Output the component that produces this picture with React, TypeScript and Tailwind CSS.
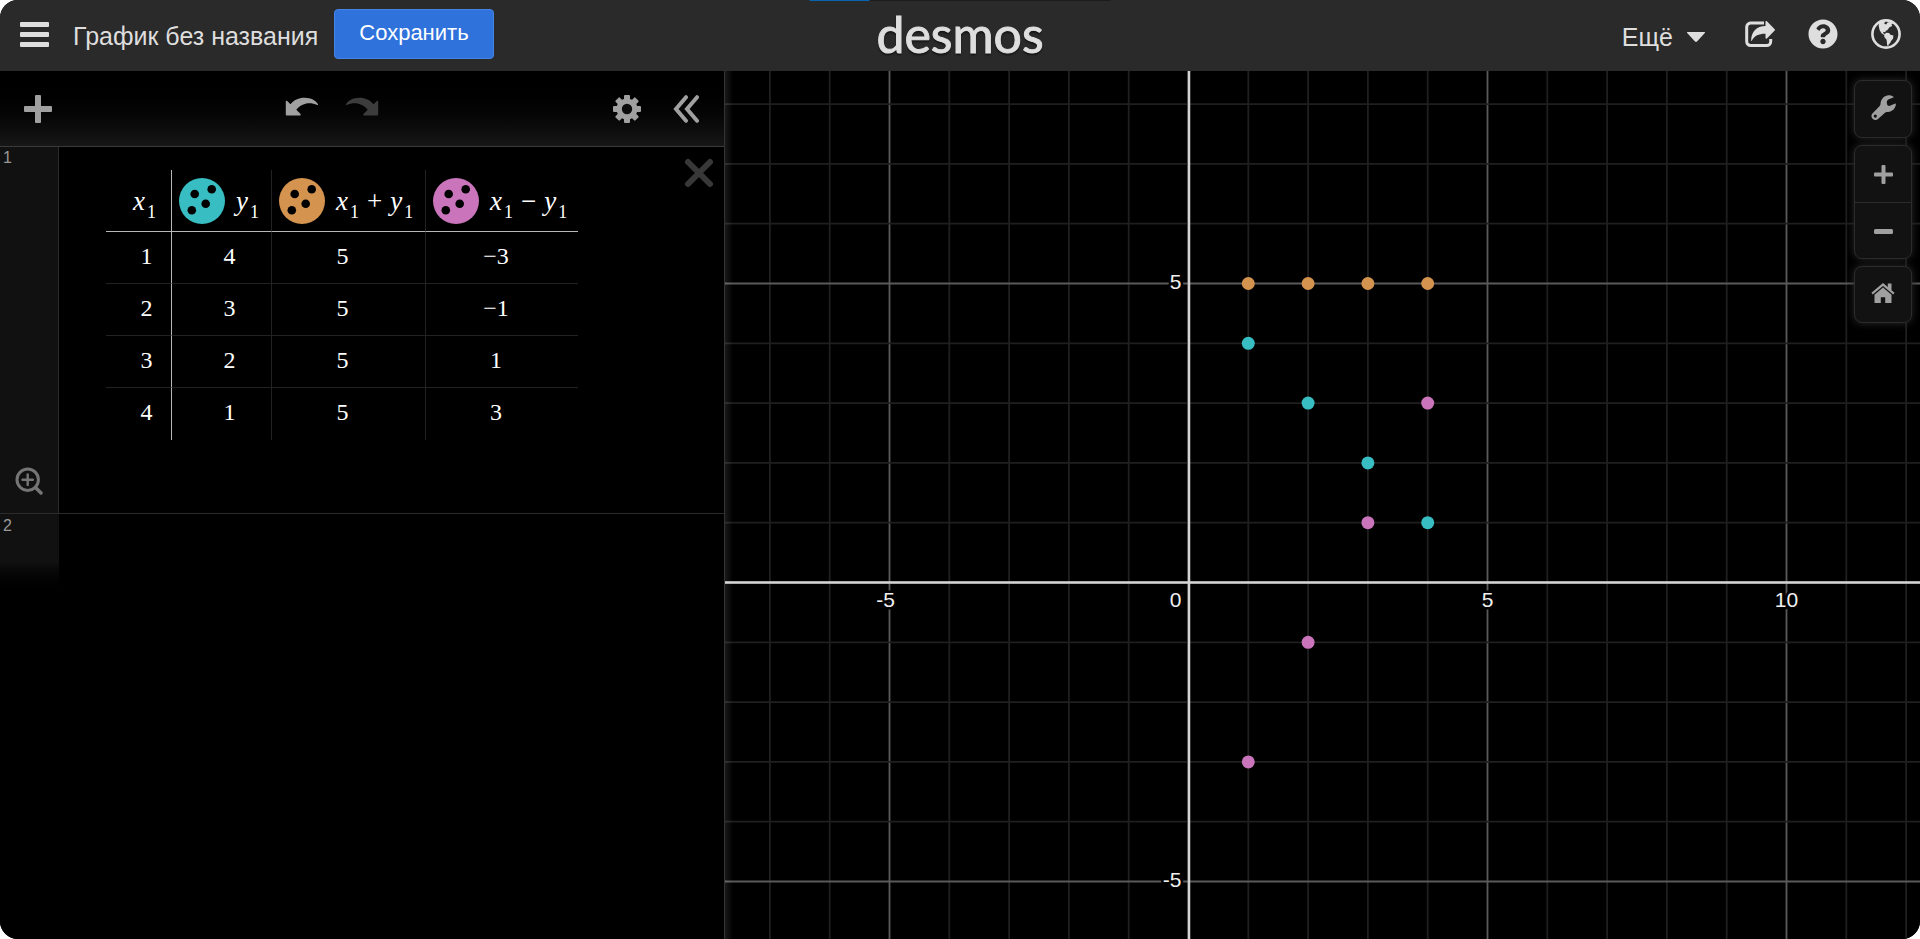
import React from "react";
import { FaQuestionCircle } from "react-icons/fa";

const TEAL = "#38bdc2";
const ORANGE = "#d4934f";
const PINK = "#c974bb";

const UNIT = 59.8;
const ORIGIN = { x: 463.5, y: 511.5 };
const px = (x: number) => ORIGIN.x + x * UNIT;
const py = (y: number) => ORIGIN.y - y * UNIT;

const range = (from: number, to: number) =>
  Array.from({ length: to - from + 1 }, (_, i) => from + i);

const rows = [1, 2, 3, 4].map((x) => {
  const y = 5 - x;
  return { x, y, sum: x + y, diff: x - y };
});

const minus = (n: number) => String(n).replace("-", "−");

function Sub({ name }: { name: string }) {
  return (
    <span>
      <i>{name}</i>
      <sub className="relative top-2 ml-0.5 align-baseline text-[18px] leading-none">1</sub>
    </span>
  );
}

function Dots({ className, label }: { className: string; label: string }) {
  return (
    <button type="button" aria-label={label} className={className}>
      <svg viewBox="0 0 46 46" className="size-full" fill="#000">
        <circle cx="15.7" cy="16" r="4.3" />
        <circle cx="32.7" cy="11.3" r="4.3" />
        <circle cx="26.7" cy="25.8" r="4.3" />
        <circle cx="12.8" cy="32.2" r="4.3" />
      </svg>
    </button>
  );
}

function CurvedArrow({ className }: { className: string }) {
  return (
    <svg viewBox="0 0 34 20" className={className} fill="currentColor">
      <path d="M.8 4.6C.8 3.8 1.7 3.5 2.2 4L5.5 7.2C9 3 14 .6 20 .8c6 .2 10.500 2.500 13 6.400.3.600-.1 1-.7.800C28 6.200 24.500 5.800 20.500 6.700c-4 .9-7 3.200-9.200 6l4 4c.7.700.4 1.900-.6 1.900H2c-.7 0-1.200-.5-1.200-1.200z" />
    </svg>
  );
}

function Gear() {
  return (
    <svg viewBox="-14 -14 28 28" className="size-7" fill="currentColor">
      {range(0, 3).map((i) => (
        <rect key={i} x="-3" y="-14" width="6" height="28" rx="1" transform={`rotate(${i * 45})`} />
      ))}
      <circle r="10.500" />
      <circle r="5.200" fill="#0c0c0c" />
    </svg>
  );
}

function Globe() {
  return (
    <svg viewBox="0 0 30 30" className="size-[30px]">
      <circle cx="15" cy="15" r="13.600" fill="none" stroke="currentColor" strokeWidth="2.600" />
      <path
        fill="currentColor"
        d="M8 4.300 12 2l2 1.200-.8 1.600 2 .8 1.300-2.100L20 2.800l2.300 1.700-1.800.5.7 2-2.700 1.300-2.300 3-1.400.4-.5 1.500-1.800-.5-.4 1.300 1.600.9-.5 1-2.700-1.700L8.600 11 7.700 7z"
      />
      <path
        fill="currentColor"
        d="M13.200 15.200l2.300-1.500 2.600.4 1.300 1.600 3 .8-.3 3-1.800 2.200-1.300 2.500-1.300 1.200-.4 1.700-1.100-.7-.6-5.600-2.300-2.700z"
      />
    </svg>
  );
}

function Header() {
  return (
    <header className="grid h-[71px] shrink-0 grid-cols-[1fr_auto_1fr] items-center bg-[#2a2a2a] text-[#dedede]">
      <div className="flex items-center pb-[3px] pl-5">
        <button type="button" aria-label="Меню" className="mr-6">
          <svg viewBox="0 0 29 25" className="h-[25px] w-[29px]" fill="currentColor">
            <rect width="29" height="5" rx="1" />
            <rect y="10" width="29" height="5" rx="1" />
            <rect y="20" width="29" height="5" rx="1" />
          </svg>
        </button>
        <button type="button" className="mr-4 whitespace-nowrap pt-1 text-[25px] leading-8">
          График без названия
        </button>
        <button
          type="button"
          className="h-[50px] rounded border border-[#4583e4] bg-[#2f72dc] px-6 pb-0.5 text-[22px] leading-8 text-white"
        >
          Сохранить
        </button>
      </div>
      <a
        href="#"
        className="pb-1 font-['Lato',sans-serif] text-[50px] leading-none [-webkit-text-stroke:1px_#dedede] [text-shadow:0_2px_2px_#111]"
      >
        desmos
      </a>
      <div className="flex items-center justify-end pr-[19px]">
        <button type="button" className="mr-10 flex items-center gap-[14px] pt-0.5 text-[25px] leading-8">
          Ещё
          <svg viewBox="0 0 18 10" className="h-[10px] w-[18px]" fill="currentColor">
            <path d="M.5 0h17c.5 0 .7.600.3 1L10 9.500c-.5.600-1.500.600-2 0L.2 1C-.2.600 0 0 .5 0z" />
          </svg>
        </button>
        <div className="flex items-center gap-[33px] pb-[3px]">
          <button type="button" aria-label="Поделиться">
            <svg viewBox="0 0 30 26" className="h-[26px] w-[30px]" fill="none">
              <path
                d="M19 2H5.500A4 4 0 0 0 1.700 6v14.500a4 4 0 0 0 4 4h16a4 4 0 0 0 4-4V18"
                stroke="currentColor"
                strokeWidth="3"
              />
              <path
                d="M20.500.8c0-.8.900-1.100 1.400-.6l7.800 8c.4.400.4.900 0 1.300l-7.800 8c-.5.500-1.400.200-1.400-.6V12.700C14 12.600 9.500 14.500 6.800 19.800c-.2.400-.7.300-.7-.200C6.400 10.500 11.500 5.200 20.500 5z"
                fill="currentColor"
              />
            </svg>
          </button>
          <button type="button" aria-label="Помощь">
            <FaQuestionCircle className="size-[30px]" />
          </button>
          <button type="button" aria-label="Язык">
            <Globe />
          </button>
        </div>
      </div>
    </header>
  );
}

function Toolbar() {
  return (
    <div className="grid h-[76px] shrink-0 grid-cols-3 items-center border-b border-[#3a3a3a] bg-linear-to-b from-black to-[#171717] pr-[25px] pl-6 text-[#a0a0a0]">
      <button type="button" aria-label="Добавить" className="w-7">
        <svg viewBox="0 0 28 28" className="size-7" fill="currentColor">
          <rect x="11" width="6" height="28" rx="1" />
          <rect y="11" width="28" height="6" rx="1" />
        </svg>
      </button>
      <div className="flex justify-start gap-[26px] pb-1 pl-9">
        <button type="button" aria-label="Отменить">
          <CurvedArrow className="h-5 w-[34px]" />
        </button>
        <button type="button" aria-label="Повторить" className="text-[#3c3c3c]">
          <CurvedArrow className="h-5 w-[34px] -scale-x-100" />
        </button>
      </div>
      <div className="flex items-center justify-end gap-8">
        <button type="button" aria-label="Настройки">
          <Gear />
        </button>
        <button type="button" aria-label="Скрыть список">
          <svg
            viewBox="0 0 26 28"
            className="h-7 w-[26px]"
            fill="none"
            stroke="currentColor"
            strokeWidth="4"
            strokeLinecap="round"
          >
            <path d="M13 2.200 3 14l10 11.800M24 2.200 14 14l10 11.800" />
          </svg>
        </button>
      </div>
    </div>
  );
}

const headCell = "h-[62px] border-b border-b-[#b8b8b8] p-0 font-normal";
const bodyCell = "h-[52px] p-0 pb-1 text-center";

function ValueTable() {
  return (
    <table className="w-[472px] table-fixed border-separate border-spacing-0 font-['Liberation_Serif',serif] text-[24px] leading-8 text-white">
      <colgroup>
        <col className="w-[66px]" />
        <col className="w-[100px]" />
        <col className="w-[154px]" />
        <col />
      </colgroup>
      <thead className="text-[27px]">
        <tr>
          <th className={`${headCell} border-r border-r-[#b8b8b8] pl-3`}>
            <Sub name="x" />
          </th>
          <th className={`${headCell} border-r border-r-[#222]`}>
            <div className="flex items-center gap-[11px] pl-[7px]">
              <Dots label="Стиль y1" className="size-[46px] rounded-full bg-[#38bdc2]" />
              <Sub name="y" />
            </div>
          </th>
          <th className={`${headCell} border-r border-r-[#222]`}>
            <div className="flex items-center gap-[11px] pl-[7px]">
              <Dots label="Стиль x1 + y1" className="size-[46px] rounded-full bg-[#d4934f]" />
              <span className="flex gap-2">
                <Sub name="x" />+<Sub name="y" />
              </span>
            </div>
          </th>
          <th className={headCell}>
            <div className="flex items-center gap-[11px] pl-[7px]">
              <Dots label="Стиль x1 − y1" className="size-[46px] rounded-full bg-[#c974bb]" />
              <span className="flex gap-2">
                <Sub name="x" />−<Sub name="y" />
              </span>
            </div>
          </th>
        </tr>
      </thead>
      <tbody className="[&>tr:not(:last-child)>td]:border-b [&>tr:not(:last-child)>td]:border-b-[#222]">
        {rows.map((r) => (
          <tr key={r.x}>
            <td className={`${bodyCell} border-r border-r-[#b8b8b8] pl-4`}>{r.x}</td>
            <td className={`${bodyCell} border-r border-r-[#222] pl-4`}>{r.y}</td>
            <td className={`${bodyCell} border-r border-r-[#222] pr-3`}>{r.sum}</td>
            <td className={`${bodyCell} pr-3`}>{minus(r.diff)}</td>
          </tr>
        ))}
      </tbody>
    </table>
  );
}

function ExpressionList() {
  return (
    <aside className="flex w-[725px] shrink-0 flex-col border-r border-[#333] bg-black">
      <Toolbar />
      <div className="flex h-[367px] border-b border-[#2b2b2b]">
        <div className="flex w-[59px] shrink-0 flex-col items-start justify-between border-r border-[#2b2b2b] bg-[#111] pt-px pb-[18px] pl-[3px] text-[16px] leading-5 text-[#999]">
          <span>1</span>
          <button type="button" aria-label="Показать все точки" className="ml-3 text-[#757575]">
            <svg
              viewBox="0 0 28 28"
              className="size-7"
              fill="none"
              stroke="currentColor"
              strokeWidth="3"
              strokeLinecap="round"
            >
              <circle cx="12.700" cy="12.700" r="10.700" />
              <path d="M20.500 20.500l5.500 5.500" strokeWidth="3.500" />
              <path d="M12.700 7.500v10.400M7.500 12.700h10.400" strokeWidth="2.400" />
            </svg>
          </button>
        </div>
        <div className="flex flex-1 items-start justify-between pt-[23px] pr-[10px] pl-[47px]">
          <ValueTable />
          <button type="button" aria-label="Удалить" className="-mt-3">
            <svg
              viewBox="0 0 30 30"
              className="size-[30px]"
              stroke="#383838"
              strokeWidth="6"
              strokeLinecap="round"
            >
              <path d="M4 4l22 22M26 4l-22 22" />
            </svg>
          </button>
        </div>
      </div>
      <div className="h-[86px] w-[59px] bg-linear-to-b from-[#111] from-55% to-black pt-0.5 pl-[3px] text-[16px] leading-5 text-[#999]">
        2
      </div>
    </aside>
  );
}

function Graph() {
  const label = {
    fill: "#f0f0f0",
    stroke: "#000",
    strokeWidth: 5,
    paintOrder: "stroke",
    fontSize: 21,
    strokeLinejoin: "round" as const,
  };
  return (
    <svg
      viewBox="0 0 1195 868"
      preserveAspectRatio="xMidYMid slice"
      className="absolute inset-0 size-full bg-black font-['Liberation_Sans',Arial,sans-serif]"
    >
      {range(-7, 12).map((x) => (
        <line
          key={`v${x}`}
          x1={px(x)}
          x2={px(x)}
          y1="0"
          y2="868"
          stroke={x % 5 ? "#1f1f1f" : "#5a5a5a"}
          strokeWidth={x % 5 ? 1.8 : 1.8}
        />
      ))}
      {range(-5, 8).map((y) => (
        <line
          key={`h${y}`}
          x1="0"
          x2="1195"
          y1={py(y)}
          y2={py(y)}
          stroke={y % 5 ? "#1f1f1f" : "#5a5a5a"}
          strokeWidth={y % 5 ? 1.8 : 1.8}
        />
      ))}
      <g stroke="#d4d4d4" strokeWidth="2.500">
        <line x1={px(0) + 0.5} x2={px(0) + 0.5} y1="0" y2="868" />
        <line x1="0" x2="1195" y1={py(0)} y2={py(0)} />
      </g>
      <text {...label} x={px(-5) - 4} y={py(0) + 24} textAnchor="middle">-5</text>
      <text {...label} x={px(0) - 7} y={py(0) + 24} textAnchor="end">0</text>
      <text {...label} x={px(5)} y={py(0) + 24} textAnchor="middle">5</text>
      <text {...label} x={px(10)} y={py(0) + 24} textAnchor="middle">10</text>
      <text {...label} x={px(0) - 7} y={py(5) + 5} textAnchor="end">5</text>
      <text {...label} x={px(0) - 7} y={py(-5) + 5} textAnchor="end">-5</text>
      {rows.map((r) => (
        <g key={r.x}>
          <circle cx={px(r.x)} cy={py(r.y)} r="6.500" fill={TEAL} />
          <circle cx={px(r.x)} cy={py(r.sum)} r="6.500" fill={ORANGE} />
          <circle cx={px(r.x)} cy={py(r.diff)} r="6.500" fill={PINK} />
        </g>
      ))}
    </svg>
  );
}

function GraphControls() {
  return (
    <div className="absolute top-[9px] right-2 flex w-[58px] flex-col gap-[7px] text-[#a0a0a0]">
      <button
        type="button"
        aria-label="Настройки графика"
        className="flex h-[58px] items-center justify-center rounded-lg border border-[#2c2c2c] bg-[#121212] pb-1 shadow-[0_0_8px_#2a2a2a]"
      >
        <svg viewBox="0 0 25 25" className="size-[25px]" fill="currentColor" fillRule="evenodd">
          <path d="M22.300 2.600 17.800 4.200c-1.300.500-2.100 1.900-2 3.300l.3 1.800c.300 1.300 1.500 1.900 2.800 1.500L24.300 8.600c.3-.1.600.2.600.5-.4 5-4.300 8.300-8.700 7.800-.9-.1-1.600.2-2.200.8L7 24c-1.500 1.400-3.900 1.300-5.400-.2s-1.600-3.800-.2-5.300L8.700 11c.5-.5.800-1.200.8-2C9.700 3.500 14.500-.9 19.800.5c1 .3 1.900.7 2.600 1.300.3.200.2.600-.1.800zM4.300 22.700a1.600 1.600 0 1 0 0-3.200 1.600 1.600 0 0 0 0 3.200z" />
        </svg>
      </button>
      <div className="flex h-[114px] flex-col divide-y divide-[#2c2c2c] rounded-lg border border-[#2c2c2c] bg-[#121212] shadow-[0_0_8px_#2a2a2a]">
        <button type="button" aria-label="Увеличить" className="flex flex-1 items-center justify-center pt-0.5">
          <svg viewBox="0 0 19 19" className="size-[19px]" fill="currentColor">
            <rect x="7.500" width="4" height="19" rx="1" />
            <rect y="7.500" width="19" height="4" rx="1" />
          </svg>
        </button>
        <button type="button" aria-label="Уменьшить" className="flex flex-1 items-center justify-center pt-0.5">
          <svg viewBox="0 0 19 5" className="h-[5px] w-[19px]" fill="currentColor">
            <rect width="19" height="5" rx="1.500" />
          </svg>
        </button>
      </div>
      <button
        type="button"
        aria-label="Масштаб по умолчанию"
        className="flex h-[57px] items-center justify-center rounded-lg border border-[#2c2c2c] bg-[#121212] pb-1 shadow-[0_0_8px_#2a2a2a]"
      >
        <svg viewBox="0 0 24 20" className="h-5 w-6" fill="currentColor">
          <path d="M12 0 .4 9.800l1.400 1.600L12 2.900l10.200 8.500 1.400-1.600-3.100-2.600V.500h-3.700v3.600z" />
          <path d="M12 4.600 3.500 11.700V20H9.800v-5.800h4.400V20h6.300v-8.300z" />
        </svg>
      </button>
    </div>
  );
}

export default function App() {
  return (
    <div className="min-h-screen bg-white">
      <div className="relative flex h-screen flex-col overflow-hidden rounded-[18px] bg-black font-['Liberation_Sans',Arial,sans-serif]">
        <div className="absolute top-0 left-1/2 flex h-px w-[301px] -translate-x-1/2 bg-[#1c1c1c]">
          <div className="w-[60px] bg-[#0a63b0]" />
        </div>
        <Header />
        <div className="flex min-h-0 flex-1">
          <ExpressionList />
          <main className="relative min-w-0 flex-1">
            <Graph />
            <div className="absolute inset-y-0 left-0 w-2 bg-linear-to-r from-white/10 to-transparent" />
            <GraphControls />
          </main>
        </div>
      </div>
    </div>
  );
}
